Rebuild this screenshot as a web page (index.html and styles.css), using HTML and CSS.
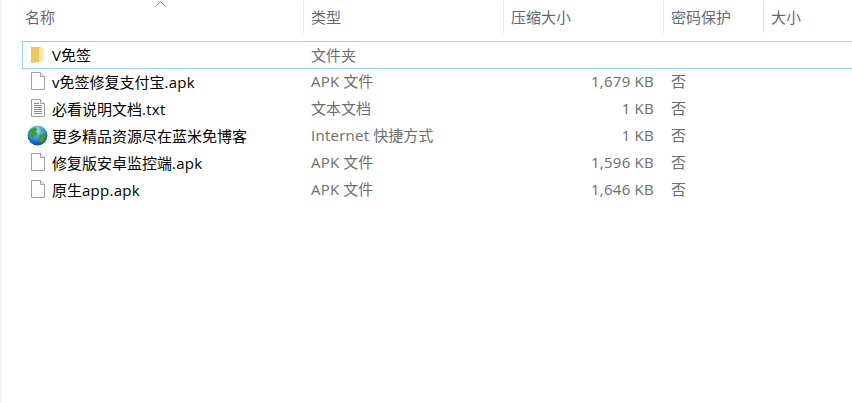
FILE: index.html
```html
<!DOCTYPE html>
<html lang="zh-CN">
<head>
<meta charset="utf-8">
<title>V免签</title>
<link rel="stylesheet" href="styles.css">
</head>
<body>
<svg class="defs" width="0" height="0" aria-hidden="true">
  <defs>
    <linearGradient id="fold" x1="0" y1="0" x2="1" y2="0"><stop offset="0" stop-color="#f0cc6e"/><stop offset="1" stop-color="#e8b949"/></linearGradient>
    <radialGradient id="sea" cx="0.45" cy="0.25" r="0.8"><stop offset="0" stop-color="#b4e2f8"/><stop offset="0.45" stop-color="#3f9be0"/><stop offset="0.8" stop-color="#1c5fb0"/><stop offset="1" stop-color="#123f80"/></radialGradient>
    <symbol id="file" viewBox="0 0 16 18"><path d="M1.500.5h9l4 4v13h-13z" fill="#fdfdfd" stroke="#a0a0a0"/><path d="M10.500.5v4h4" fill="#eee" stroke="#a0a0a0"/></symbol>
    <symbol id="txt" viewBox="0 0 16 18"><path d="M1.500.5h9l4 4v13h-13z" fill="#fdfdfd" stroke="#a0a0a0"/><path d="M10.500.5v4h4" fill="#eee" stroke="#a0a0a0"/><path d="M4 4.500h5M4 6.500h8M4 8.500h8M4 10.500h8M4 12.500h8M4 14.500h8" stroke="#8c8c8c"/></symbol>
  </defs>
</svg>
<div class="sidebar-edge"></div>
<main class="list">
  <header class="cols head">
    <div class="h h-name">名称<svg class="sort" width="11" height="6" viewBox="0 0 11 6"><path d="M.5 5.500l5-5 5 5" fill="none" stroke="#8a8a8a"/></svg></div>
    <div class="h">类型</div>
    <div class="h">压缩大小</div>
    <div class="h">密码保护</div>
    <div class="h">大小</div>
  </header>
  <div class="rows">
    <div class="cols row selected">
      <div class="name"><svg class="ic" width="16" height="18" viewBox="0 0 16 18"><path d="M1 1h8l3 1v13l-3 .5V16l-8 1z" fill="url(#fold)"/><path d="M9 2h4.500v13H9z" fill="#fbe7a6"/><path d="M1 1l8 1.500v12L1 17z" fill="#f0c765"/></svg><span>V免签</span></div>
      <div class="type">文件夹</div><div class="size"></div><div class="pw"></div><div></div>
    </div>
    <div class="cols row">
      <div class="name"><svg class="ic" width="16" height="18"><use href="#file"/></svg><span>v免签修复支付宝<span class="lat">.apk</span></span></div>
      <div class="type"><span class="lat">APK</span> 文件</div><div class="size">1,679 KB</div><div class="pw">否</div><div></div>
    </div>
    <div class="cols row">
      <div class="name"><svg class="ic" width="16" height="18"><use href="#txt"/></svg><span>必看说明文档<span class="lat">.txt</span></span></div>
      <div class="type">文本文档</div><div class="size">1 KB</div><div class="pw">否</div><div></div>
    </div>
    <div class="cols row">
      <div class="name"><svg class="ic ic-globe" width="21" height="21" viewBox="0 0 21 21"><circle cx="10.500" cy="10.500" r="10" fill="url(#sea)"/><path d="M5 3.500c1.500-1 3-1.200 4-.8l1.500 1.800-1.500 2 1.500 2.500-1 2.500-2.500-.5-1 2.500-2.500-2.500-1.500-3 1-3z" fill="#3e9e3a"/><path d="M12 10l4-1.500 3 1.500-1 4-3 4-2-1-1-4z" fill="#3f9e36"/><path d="M13 3l3.500 2 1.500 2.500-3.500-1z" fill="#58b04a"/></svg><span>更多精品资源尽在蓝米免博客</span></div>
      <div class="type"><span class="lat">Internet</span> 快捷方式</div><div class="size">1 KB</div><div class="pw">否</div><div></div>
    </div>
    <div class="cols row">
      <div class="name"><svg class="ic" width="16" height="18"><use href="#file"/></svg><span>修复版安卓监控端<span class="lat">.apk</span></span></div>
      <div class="type"><span class="lat">APK</span> 文件</div><div class="size">1,596 KB</div><div class="pw">否</div><div></div>
    </div>
    <div class="cols row">
      <div class="name"><svg class="ic" width="16" height="18"><use href="#file"/></svg><span>原生<span class="lat">app.apk</span></span></div>
      <div class="type"><span class="lat">APK</span> 文件</div><div class="size">1,646 KB</div><div class="pw">否</div><div></div>
    </div>
  </div>
</main>
</body>
</html>
```
FILE: styles.css
```css
* { box-sizing: border-box; }
html, body { margin: 0; height: 100%; background: #fff; overflow: hidden; }
body { font-family: "Open Sans", "Noto Sans CJK SC", sans-serif; font-size: 15px; }
.defs { position: absolute; }
.sidebar-edge { position: absolute; left: 0; top: 0; bottom: 0; width: 2px; background: #f4f4f4; }
.list { padding-left: 22px; padding-top: 1px; }
.cols { display: grid; grid-template-columns: 281px 200px 160px 100px 89px; }
.head { height: 32px; }
.h { position: relative; padding-left: 7px; line-height: 32px; color: #5d6b7a; border-left: 1px solid #e5e5e5; }
.h-name { border-left: 0; padding-left: 3px; }
.sort { position: absolute; left: 133px; top: 0; }
.rows { margin-top: 8px; }
.row { height: 27px; line-height: 26px; color: #6d6d6d; }
.row.selected { height: 28px; margin-bottom: -1px; border: 1px solid #99d1ff; border-right: 0; }
.row.selected .type { padding-left: 7px; }
.name { display: flex; align-items: center; gap: 6px; padding-left: 8px; color: #000; white-space: nowrap; }
.selected .name { padding-left: 7px; }
.ic { flex: none; margin-top: -1px; }
.ic-globe { margin-left: -3px; margin-right: -2px; }
.lat { letter-spacing: .25px; }
.type { padding-left: 8px; white-space: nowrap; }
.size { text-align: right; padding-right: 9px; white-space: nowrap; letter-spacing: .25px; }
.pw { padding-left: 8px; }
```
